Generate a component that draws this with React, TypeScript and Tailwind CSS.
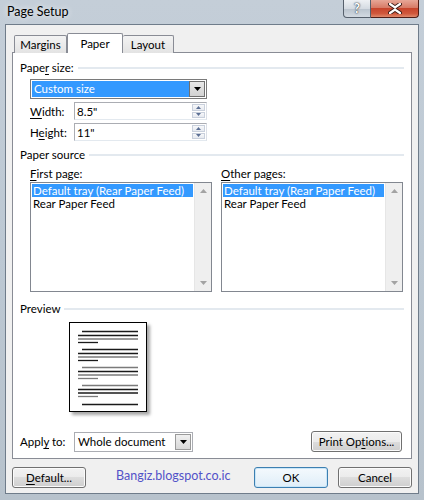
import React from "react";

const FONT = "font-['Lato','Segoe_UI',sans-serif]";

const U = ({ children }: { children: React.ReactNode }) => (
  <span className="underline underline-offset-[2px] decoration-1">{children}</span>
);

const GroupTitle = ({ children }: { children: React.ReactNode }) => (
  <div className="flex items-center h-[15px] pl-[7px] pr-[7px]">
    <span className="leading-[15px]">{children}</span>
    <div className="ml-[4px] flex-1 h-[2px] bg-[#e3e9ef]" />
  </div>
);

const DropArrow = () => (
  <svg width="7" height="4" viewBox="0 0 7 4">
    <path d="M0 0h7L3.5 4z" fill="#000" />
  </svg>
);

const Spinner = () => (
  <div className="flex flex-col w-[15px] h-full gap-px p-px">
    <div className="flex-1 border border-[#c9d0dc] bg-gradient-to-b from-[#f7f8fa] to-[#e7eaf0] flex items-center justify-center">
      <svg width="5" height="3" viewBox="0 0 5 3">
        <path d="M0 3h5L2.5 0z" fill="#5c6f94" />
      </svg>
    </div>
    <div className="flex-1 border border-[#c9d0dc] bg-gradient-to-b from-[#f7f8fa] to-[#e7eaf0] flex items-center justify-center">
      <svg width="5" height="3" viewBox="0 0 5 3">
        <path d="M0 0h5L2.5 3z" fill="#5c6f94" />
      </svg>
    </div>
  </div>
);

const NumberField = ({ label, value }: { label: React.ReactNode; value: string }) => (
  <div className="flex items-center h-[18px] pl-[17px]">
    <span className="w-[44px] leading-[15px]">{label}</span>
    <div className="w-[133px] h-[18px] border border-[#abadb3] border-b-[#e3e9ef] border-r-[#dbdfe6] bg-white flex">
      <span className="flex-1 pl-[2px] leading-[15px] pt-px">{value}</span>
      <Spinner />
    </div>
  </div>
);

const ListBox = ({ label }: { label: React.ReactNode }) => (
  <div className="flex flex-col w-[182px]">
    <span className="h-[15px] leading-[15px]">{label}</span>
    <div className="mt-px h-[110px] border border-[#828790] bg-white flex">
      <div className="flex-1 p-px">
        <div className="h-[13px] leading-[13px] bg-[#3399ff] text-white pl-px whitespace-nowrap overflow-hidden">
          Default tray (Rear Paper Feed)
        </div>
        <div className="h-[13px] leading-[13px] pl-px whitespace-nowrap">Rear Paper Feed</div>
      </div>
      <div className="w-[17px] bg-[#efefef] border-l border-[#e6e6e6] flex flex-col items-center justify-between py-[6px]">
        <svg width="7" height="4" viewBox="0 0 7 4">
          <path d="M0 4h7L3.5 0z" fill="#a3a3a3" />
        </svg>
        <svg width="7" height="4" viewBox="0 0 7 4">
          <path d="M0 0h7L3.5 4z" fill="#a3a3a3" />
        </svg>
      </div>
    </div>
  </div>
);

const WinButton = ({
  children,
  className = "",
  primary = false,
}: {
  children: React.ReactNode;
  className?: string;
  primary?: boolean;
}) => (
  <div
    className={
      "h-[21px] rounded-[3px] border flex items-center justify-center leading-[15px] " +
      (primary
        ? "border-[#3c7fb1] bg-gradient-to-b from-[#f4f9fd] to-[#dfeef8] shadow-[inset_0_0_0_1px_#c9e6f8] "
        : "border-[#707070] bg-[linear-gradient(#f2f2f2_0%,#ebebeb_50%,#dddddd_50%,#cfcfcf_100%)] shadow-[inset_0_0_0_1px_#fbfbfb] ") +
      className
    }
  >
    {children}
  </div>
);

type Line = { y: number; x1: number; dark: boolean };

const lines: Line[] = [
  { y: 8.5, x1: 13, dark: true },
  { y: 12.5, x1: 9, dark: true },
  { y: 16, x1: 9, dark: false },
  { y: 19.5, x1: 9, dark: true },
  { y: 26.5, x1: 13, dark: true },
  { y: 30.5, x1: 9, dark: true },
  { y: 34, x1: 9, dark: false },
  { y: 37.5, x1: 9, dark: true },
  { y: 44.5, x1: 13, dark: false },
  { y: 48.5, x1: 9, dark: true },
  { y: 52, x1: 9, dark: false },
  { y: 55.5, x1: 9, dark: false },
  { y: 62.5, x1: 13, dark: false },
  { y: 66.5, x1: 9, dark: true },
  { y: 70, x1: 9, dark: true },
  { y: 73.5, x1: 9, dark: false },
  { y: 81.5, x1: 13, dark: true },
];

const PreviewPage = () => (
  <div className="ml-[56px] w-[78px] h-[90px] border border-black bg-white shadow-[3px_3px_3px_rgba(0,0,0,0.35)]">
    <svg width="76" height="88" viewBox="0 0 76 88">
      {lines.map((l, i) => {
        const short = l.x1 === 9 && [19.5, 37.5, 55.5, 73.5].includes(l.y);
        return (
          <line
            key={i}
            x1={l.x1 - 1}
            x2={short ? 28 : 68}
            y1={l.y}
            y2={l.y}
            stroke={l.dark ? "#1a1a1a" : "#7a7a7a"}
            strokeWidth="1.3"
          />
        );
      })}
    </svg>
  </div>
);

export default function App() {
  return (
    <div
      className={
        "w-[424px] h-[500px] overflow-hidden text-[11.5px] text-black bg-gradient-to-b from-[#c4ced8] via-[#bcc8d3] to-[#b7c2cc] " +
        FONT
      }
    >
      {/* title bar */}
      <div className="h-[24px] flex items-start">
        <span className="pl-[7px] pt-[4px] text-[12.5px] leading-[16px] text-black [text-shadow:0_0_6px_#ffffff]">
          Page Setup
        </span>
        <div className="ml-auto mr-[5px] flex h-[18px]">
          <div className="w-[28px] h-full rounded-bl-[4px] border border-t-0 border-[#56606c] bg-[linear-gradient(#eef1f4_0%,#d5dbe2_50%,#b9c3cd_51%,#d3dae2_100%)] flex items-center justify-center">
            <span className="text-[13px] font-bold leading-none text-white [text-shadow:0_0_2px_#2b3642,0_0_1px_#2b3642]">
              ?
            </span>
          </div>
          <div className="w-[48px] h-full rounded-br-[4px] border border-l-0 border-t-0 border-[#4f1d16] bg-[linear-gradient(#e7a797_0%,#d77b66_45%,#c7452c_50%,#d0583c_80%,#e08a6c_100%)] flex items-center justify-center">
            <svg width="14" height="11" viewBox="0 0 14 11">
              <path
                d="M2 1l5 3.5L12 1M2 10l5-3.5L12 10"
                stroke="#3a1a14"
                strokeWidth="4"
                fill="none"
                strokeLinecap="round"
              />
              <path
                d="M2 1l5 3.5L12 1M2 10l5-3.5L12 10"
                stroke="#ffffff"
                strokeWidth="2.2"
                fill="none"
                strokeLinecap="round"
              />
            </svg>
          </div>
        </div>
      </div>

      {/* client area */}
      <div className="mx-[5px] h-[470px] border border-[#6f7c8a] bg-[#f0f0f0] px-[6px] flex flex-col">
        {/* tabs */}
        <div className="mt-[8px] ml-[2px] h-[20px] -mb-px flex items-start relative z-10">
          <div className="mt-[2px] w-[53px] h-[18px] border border-b-0 border-[#898c95] rounded-t-[2px] bg-gradient-to-b from-[#f3f3f3] to-[#e3e3e3] flex items-center justify-center leading-[15px]">
            Margins
          </div>
          <div className="w-[56px] h-[20px] border border-b-0 border-[#898c95] rounded-t-[2px] bg-white flex items-center justify-center leading-[15px] pb-[1px]">
            Paper
          </div>
          <div className="mt-[2px] w-[51px] h-[18px] border border-b-0 border-l-0 border-[#898c95] rounded-t-[2px] bg-gradient-to-b from-[#f3f3f3] to-[#e3e3e3] flex items-center justify-center leading-[15px]">
            Layout
          </div>
        </div>

        {/* panel */}
        <div className="h-[407px] border border-[#898c95] bg-white flex flex-col">
          <div className="mt-[7px]">
            <GroupTitle>
              Pape<U>r</U> size:
            </GroupTitle>
          </div>

          <div className="mt-[4px] ml-[17px] w-[177px] h-[20px] border border-[#7a7a7a] bg-white flex p-px">
            <div className="flex-1 bg-[#3399ff] text-white pl-[2px] leading-[16px]">Custom size</div>
            <div className="w-[16px] border border-[#707070] bg-gradient-to-b from-[#e8e8e8] to-[#d2d2d2] flex items-center justify-center">
              <DropArrow />
            </div>
          </div>

          <div className="mt-[3px]">
            <NumberField label={<><U>W</U>idth:</>} value={'8.5"'} />
          </div>
          <div className="mt-[3px]">
            <NumberField label={<>H<U>e</U>ight:</>} value={'11"'} />
          </div>

          <div className="mt-[6px]">
            <GroupTitle>Paper source</GroupTitle>
          </div>

          <div className="mt-[4px] pl-[17px] flex gap-[9px]">
            <ListBox label={<><U>F</U>irst page:</>} />
            <ListBox label={<><U>O</U>ther pages:</>} />
          </div>

          <div className="mt-[9px]">
            <GroupTitle>Preview</GroupTitle>
          </div>

          <div className="mt-[6px]">
            <PreviewPage />
          </div>

          <div className="mt-[19px] flex items-center pl-[7px] pr-[9px]">
            <span className="w-[54px] leading-[15px]">
              Appl<U>y</U> to:
            </span>
            <div className="w-[119px] h-[20px] border border-[#abadb3] bg-white flex p-px">
              <span className="flex-1 pl-[2px] leading-[16px]">Whole document</span>
              <div className="w-[16px] border border-[#9a9a9a] bg-gradient-to-b from-[#f0f0f0] to-[#d8d8d8] flex items-center justify-center">
                <DropArrow />
              </div>
            </div>
            <WinButton className="ml-auto w-[91px] h-[20px]">
              Print Op<U>t</U>ions...
            </WinButton>
          </div>
        </div>

        {/* bottom buttons */}
        <div className="mt-[8px] flex items-center">
          <WinButton className="w-[74px]">
            <U>D</U>efault...
          </WinButton>
          <span className="ml-[30px] -mt-[5px] w-[120px] text-[12.5px] leading-[15px] text-[#5252c8]">
            Bangiz.blogspot.co.ic
          </span>
          <WinButton primary className="ml-auto w-[74px]">
            OK
          </WinButton>
          <WinButton className="ml-[10px] w-[74px]">Cancel</WinButton>
        </div>
      </div>
    </div>
  );
}
